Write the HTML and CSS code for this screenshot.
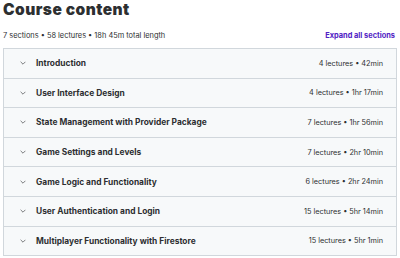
FILE: index.html
```html
<!DOCTYPE html>
<html>
<head>
<meta charset="utf-8">
<link rel="stylesheet" href="styles.css">
</head>
<body>
<div class="page">
  <h2 class="title">Course content</h2>
  <div class="meta">
    <span class="stats">7 sections • 58 lectures • 18h 45m total length</span>
    <span class="expand">Expand all sections</span>
  </div>
  <div class="sections">
    <div class="row"><span class="left"><svg class="chev" viewBox="0 0 10 6"><path d="M1 1l4 4 4-4"/></svg><span class="name">Introduction</span></span><span class="info">4 lectures • 42min</span></div>
    <div class="row"><span class="left"><svg class="chev" viewBox="0 0 10 6"><path d="M1 1l4 4 4-4"/></svg><span class="name">User Interface Design</span></span><span class="info">4 lectures • 1hr 17min</span></div>
    <div class="row"><span class="left"><svg class="chev" viewBox="0 0 10 6"><path d="M1 1l4 4 4-4"/></svg><span class="name">State Management with Provider Package</span></span><span class="info">7 lectures • 1hr 56min</span></div>
    <div class="row"><span class="left"><svg class="chev" viewBox="0 0 10 6"><path d="M1 1l4 4 4-4"/></svg><span class="name">Game Settings and Levels</span></span><span class="info">7 lectures • 2hr 10min</span></div>
    <div class="row"><span class="left"><svg class="chev" viewBox="0 0 10 6"><path d="M1 1l4 4 4-4"/></svg><span class="name">Game Logic and Functionality</span></span><span class="info">6 lectures • 2hr 24min</span></div>
    <div class="row"><span class="left"><svg class="chev" viewBox="0 0 10 6"><path d="M1 1l4 4 4-4"/></svg><span class="name">User Authentication and Login</span></span><span class="info">15 lectures • 5hr 14min</span></div>
    <div class="row"><span class="left"><svg class="chev" viewBox="0 0 10 6"><path d="M1 1l4 4 4-4"/></svg><span class="name">Multiplayer Functionality with Firestore</span></span><span class="info">15 lectures • 5hr 1min</span></div>
  </div>
</div>
</body>
</html>
```
FILE: styles.css
```css
html, body {
  margin: 0;
  padding: 0;
  background: #ffffff;
}
body {
  font-family: Inter, "Noto Sans", sans-serif;
  color: #2d2f31;
}
.page {
  padding: 0 3px;
  width: 394px;
}
.title {
  margin: 0;
  padding-top: 1px;
  font-size: 15.5px;
  font-weight: 900;
  line-height: 17px;
  letter-spacing: 0.45px;
  height: 17px;
}
.meta {
  display: flex;
  justify-content: space-between;
  align-items: center;
  margin-top: 13px;
  height: 10px;
  font-size: 7.4px;
  line-height: 10px;
  margin-bottom: 7px;
}
.stats {
  color: #2d2f31;
}
.expand {
  color: #5022c3;
  font-weight: 700;
  margin-right: 2px;
}
.sections {
  border: 1px solid #d1d7dc;
  border-bottom: none;
}
.row {
  display: flex;
  justify-content: space-between;
  align-items: center;
  height: 28.6px;
  background: #f7f9fa;
  border-bottom: 1px solid #d1d7dc;
  padding: 0 13px 0 16px;
}
.left {
  display: flex;
  align-items: center;
}
.chev {
  width: 6px;
  height: 4px;
  fill: none;
  stroke: #4a4d50;
  stroke-width: 1.2;
  margin-right: 10px;
}
.name {
  font-size: 8.4px;
  font-weight: 700;
}
.info {
  font-size: 7.3px;
  color: #2d2f31;
}
```
